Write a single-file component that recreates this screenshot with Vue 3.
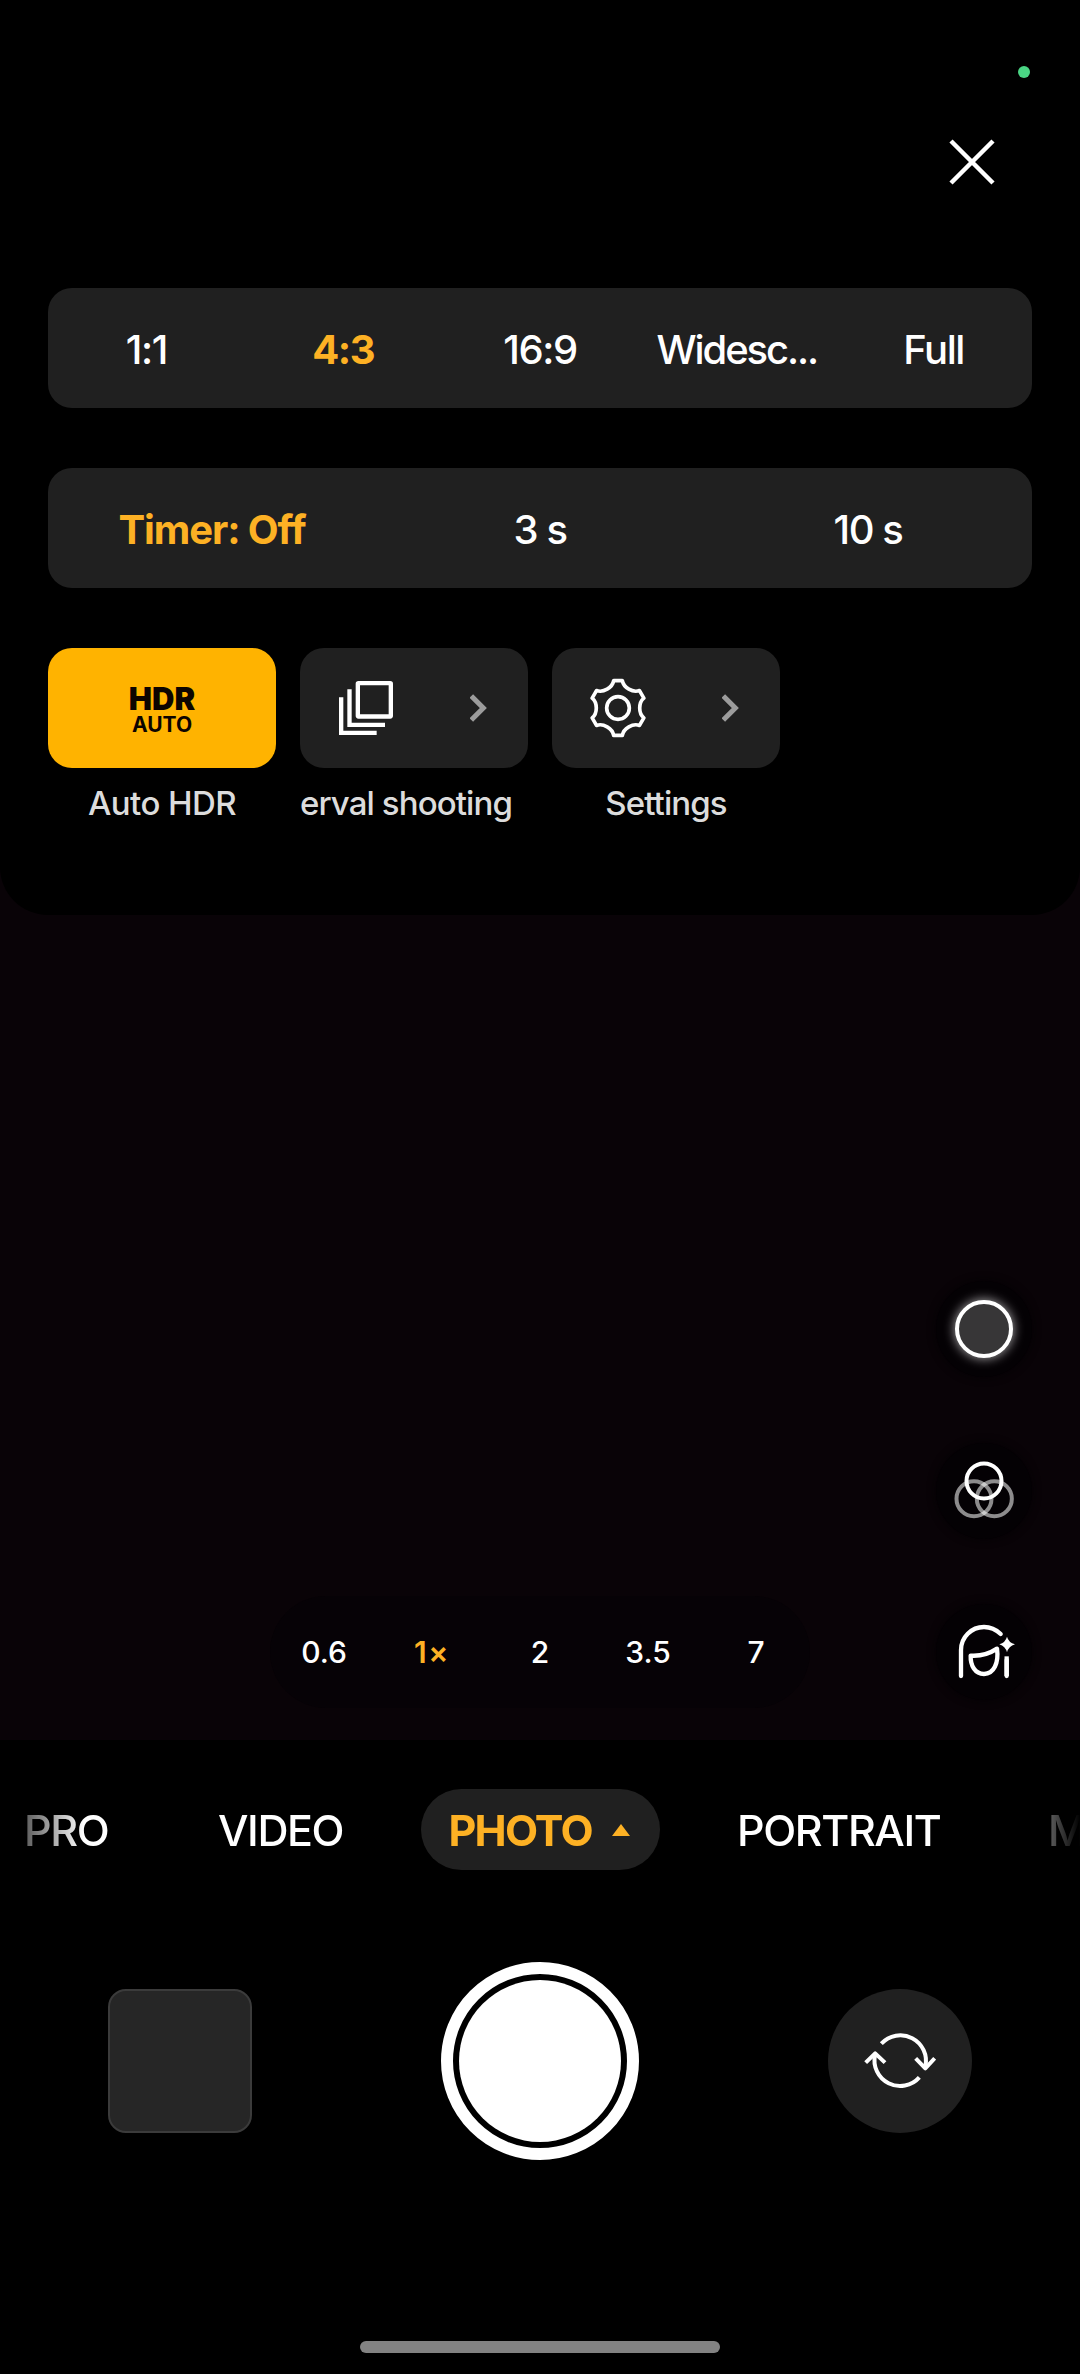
<script setup>
const ratios = [
  { label: '1:1', cls: 'r-square' },
  { label: '4:3', cls: 'r-standard', active: true },
  { label: '16:9', cls: 'r-wide' },
  { label: 'Widesc...', cls: 'r-cinema' },
  { label: 'Full', cls: 'r-full' },
]
const timers = [
  { label: 'Timer: Off', cls: 't-off', active: true },
  { label: '3 s', cls: 't-three' },
  { label: '10 s', cls: 't-ten' },
]
const zooms = [
  { label: '0.6' },
  { label: '1×', active: true },
  { label: '2' },
  { label: '3.5' },
  { label: '7' },
]

// One tooth and one valley of the gear, repeated every 60 degrees.
function gearPath() {
  const base = [[-13, -82], [13, -82], [16.6, -60.8], [44.4, -44.8], [64.5, -52.3]]
  let d = ''
  for (let i = 0; i < 6; i++) {
    const a = (i * Math.PI) / 3
    const p = base.map(([x, y]) =>
      [x * Math.cos(a) - y * Math.sin(a), x * Math.sin(a) + y * Math.cos(a)]
        .map((n) => n.toFixed(1))
        .join(' ')
    )
    d += `${i ? 'L' : 'M'}${p[0]}L${p[1]}C${p[2]} ${p[3]} ${p[4]}`
  }
  return d + 'Z'
}
const gear = gearPath()
</script>

<template>
  <div class="camera">
    <section class="stage">
      <div class="panel">
        <header class="status"><i class="dot"></i></header>
        <div class="close-row">
          <svg class="close" viewBox="0 0 48 48"><path d="M3 3L45 45M45 3L3 45" /></svg>
        </div>
        <div class="bar ratio-bar">
          <div v-for="r in ratios" :key="r.label" class="option" :class="{ active: r.active }">
            <span :class="r.cls">{{ r.label }}</span>
          </div>
        </div>
        <div class="bar timer-bar">
          <div v-for="t in timers" :key="t.label" class="option" :class="{ active: t.active }">
            <span :class="t.cls">{{ t.label }}</span>
          </div>
        </div>
        <div class="tiles">
          <div class="item">
            <div class="tile hdr">
              <b>HDR</b>
              <strong>AUTO</strong>
            </div>
            <div class="caption"><span class="c-hdr">Auto HDR</span></div>
          </div>
          <div class="item">
            <div class="tile">
              <svg class="icon" viewBox="927 153 162 162">
                <g fill="none" stroke="#fff" stroke-width="13">
                  <rect x="983.5" y="159.5" width="99" height="100" rx="2" />
                  <path d="M958.500 178V284.500H1065M933.500 202V308.500H1040" />
                </g>
              </svg>
              <svg class="chevron" viewBox="0 0 51 84"><path d="M4 6L40 42L4 78" /></svg>
            </div>
            <div class="caption scroll"><span class="c-interval">erval shooting</span></div>
          </div>
          <div class="item">
            <div class="tile">
              <svg class="icon gear" viewBox="-84 -90 168 180">
                <g fill="none" stroke="#fff" stroke-width="11" stroke-linejoin="round">
                  <path :d="gear" />
                  <circle r="34" />
                </g>
              </svg>
              <svg class="chevron" viewBox="0 0 51 84"><path d="M4 6L40 42L4 78" /></svg>
            </div>
            <div class="caption"><span class="c-settings">Settings</span></div>
          </div>
        </div>
      </div>

      <div class="controls">
        <div class="zoom">
          <span v-for="z in zooms" :key="z.label" :class="{ active: z.active }">{{ z.label }}</span>
        </div>
        <div class="rail">
          <div class="tool"><i class="ring"></i></div>
          <div class="tool">
            <svg viewBox="108 518 288 288">
              <g fill="none" stroke-width="12">
                <circle cx="222" cy="685" r="52.500" stroke="#fff" stroke-opacity=".55" />
                <circle cx="283" cy="685" r="52.500" stroke="#fff" stroke-opacity=".55" />
                <circle cx="252" cy="632" r="52.500" stroke="#fff" />
              </g>
            </svg>
          </div>
          <div class="tool">
            <svg viewBox="108 1002 288 288">
              <g fill="none" stroke="#fff" stroke-width="13" stroke-linejoin="round">
                <path stroke-linecap="round" d="M183 1218V1140A69 69 0 0 1 252 1071Q280 1071 302 1092" />
                <path d="M212 1157Q255 1160 291 1136C297 1180 281 1212 252 1212C225 1212 211 1187 212 1157Z" />
                <path d="M320 1159V1218" />
                <path stroke-linecap="round" d="M320 1170V1218" />
              </g>
              <path fill="#fff" d="M321 1100Q326 1118 345 1123Q326 1129 321 1147Q316 1129 298 1123Q316 1118 321 1100Z" />
            </svg>
          </div>
        </div>
      </div>
    </section>

    <nav class="modes">
      <span class="m-pro">PRO</span>
      <span class="m-video">VIDEO</span>
      <div class="pill">
        <span class="m-photo">PHOTO</span>
        <svg class="tri" viewBox="0 0 18 12"><path d="M9 0L18 12H0Z" /></svg>
      </div>
      <span class="m-portrait">PORTRAIT</span>
      <span class="m-more">M</span>
    </nav>

    <section class="shoot">
      <div class="thumb"></div>
      <div class="shutter"><i></i></div>
      <div class="flip">
        <svg viewBox="192 213 216 180">
          <g fill="none" stroke="#fff" stroke-width="12" stroke-linejoin="round">
            <path d="M244 251A77 77 0 0 1 376 320" />
            <path d="M347 295L376 325L404 295" />
            <path d="M358 352A77 77 0 0 1 225 285" />
            <path d="M197 308L225.500 280L255 308" />
          </g>
        </svg>
      </div>
    </section>

    <footer class="home"><i></i></footer>
  </div>
</template>

<style>
body {
  background: #000;
}
</style>

<style scoped>
.camera {
  width: 1080px;
  height: 2374px;
  background: #000;
  color: #fff;
  font-family: Inter, 'Liberation Sans', sans-serif;
  font-weight: 500;
  display: flex;
  flex-direction: column;
  overflow: hidden;
  white-space: nowrap;
}
.stage {
  height: 1740px;
  background: #090307;
  display: flex;
  flex-direction: column;
  justify-content: space-between;
}
.panel {
  height: 915px;
  box-sizing: border-box;
  padding: 0 48px;
  background: #000;
  border-radius: 0 0 48px 48px;
}
.status {
  height: 138px;
  box-sizing: border-box;
  padding: 66px 2px 0 0;
  display: flex;
  justify-content: flex-end;
}
.dot {
  width: 12px;
  height: 12px;
  border-radius: 50%;
  background: #4ad584;
}
.close-row {
  height: 150px;
  padding-right: 36px;
  display: flex;
  justify-content: flex-end;
}
.close {
  width: 48px;
  height: 48px;
  fill: none;
  stroke: #fff;
  stroke-width: 4.500;
}
.bar {
  height: 120px;
  box-sizing: border-box;
  padding-top: 3px;
  margin-bottom: 60px;
  border-radius: 24px;
  background: #202020;
  display: flex;
  align-items: center;
  font-size: 40px;
  line-height: 48px;
}
.option {
  flex: 1 1 0;
  min-width: 0;
  display: flex;
  justify-content: center;
  letter-spacing: -1.4px;
}
.r-cinema {
  letter-spacing: -2.1px;
}
.t-off {
  letter-spacing: -1.1px;
}
.active {
  color: #fdb124;
  font-weight: 700;
}
.tiles {
  display: flex;
  gap: 24px;
}
.item {
  width: 228px;
}
.tile {
  height: 120px;
  box-sizing: border-box;
  padding: 0 41px 0 39px;
  border-radius: 24px;
  background: #202020;
  display: flex;
  align-items: center;
  justify-content: space-between;
}
.icon {
  width: 54px;
  height: 54px;
}
.gear {
  width: 56px;
  height: 60px;
  margin-left: -1px;
}
.chevron {
  width: 17px;
  height: 28px;
  fill: none;
  stroke: #9c9c9c;
  stroke-width: 15;
}
.tile.hdr {
  background: #ffb300;
  color: #0d0500;
  flex-direction: column;
  justify-content: flex-start;
  padding: 37px 0 0;
}
.hdr b {
  font-size: 31px;
  line-height: 28px;
  font-weight: 900;
}
.hdr strong {
  font-size: 21px;
  line-height: 24px;
  font-weight: 700;
}
.caption {
  height: 40px;
  margin-top: 15px;
  font-size: 33px;
  line-height: 40px;
  font-weight: 450;
  letter-spacing: -0.9px;
  color: #dcdcdc;
  display: flex;
  justify-content: center;
  overflow: hidden;
}
.c-hdr {
  letter-spacing: -0.6px;
}
.caption.scroll {
  justify-content: flex-start;
}
.controls {
  display: flex;
  align-items: flex-end;
  justify-content: flex-end;
  padding: 0 48px 40px 0;
}
.zoom {
  width: 540px;
  height: 112px;
  margin: 0 126px -8px 0;
  border-radius: 56px;
  background: #060206;
  display: flex;
  align-items: center;
  font-size: 30px;
}
.zoom span {
  width: 108px;
  height: 96px;
  line-height: 97px;
  text-align: center;
}
.zoom .active {
  font-weight: 600;
  letter-spacing: 1.500px;
}
.rail {
  display: flex;
  flex-direction: column;
  gap: 65.500px;
}
.tool {
  width: 96px;
  height: 96px;
  border-radius: 50%;
  background: #040104;
  box-shadow: 0 0 8px #040104;
  display: flex;
  align-items: center;
  justify-content: center;
}
.tool svg {
  width: 96px;
  height: 96px;
}
.ring {
  width: 50px;
  height: 50px;
  border: 4px solid #fff;
  border-radius: 50%;
  background: #373637;
  box-shadow: 0 0 12px rgba(255, 255, 255, 0.7);
}
.modes {
  height: 179px;
  display: flex;
  align-items: center;
  font-size: 43px;
  line-height: 52px;
  letter-spacing: -1.4px;
  -webkit-mask-image: linear-gradient(90deg, rgba(0, 0, 0, 0.2) 10px, #000 84px, #000 996px, transparent 1080px);
  mask-image: linear-gradient(90deg, rgba(0, 0, 0, 0.2) 10px, #000 84px, #000 996px, transparent 1080px);
}
.modes > * {
  flex: none;
}
.m-pro {
  width: 194px;
  margin-left: 24px;
}
.m-video {
  width: 202.500px;
}
.pill {
  width: 239px;
  height: 81px;
  box-sizing: border-box;
  padding: 0 30px 0 28px;
  border-radius: 41px;
  background: #202020;
  color: #fdb124;
  font-weight: 700;
  letter-spacing: -1.8px;
  display: flex;
  align-items: center;
  justify-content: space-between;
}
.tri {
  width: 18px;
  height: 12px;
  fill: #fdb124;
}
.m-portrait {
  width: 311px;
  margin-left: 77.500px;
}
.shoot {
  height: 284px;
  padding: 0 108px;
  display: flex;
  align-items: center;
  justify-content: space-between;
}
.thumb {
  width: 144px;
  height: 144px;
  box-sizing: border-box;
  border: 2px solid #3b3b3b;
  border-radius: 18px;
  background: #262626;
}
.shutter {
  width: 174px;
  height: 174px;
  border: 12px solid #fff;
  border-radius: 50%;
  display: flex;
  align-items: center;
  justify-content: center;
}
.shutter i {
  width: 162px;
  height: 162px;
  border-radius: 50%;
  background: #fff;
}
.flip {
  width: 144px;
  height: 144px;
  border-radius: 50%;
  background: #202020;
  display: flex;
  align-items: center;
  justify-content: center;
}
.flip svg {
  width: 72px;
  height: 60px;
}
.home {
  flex: 1;
  display: flex;
  align-items: flex-end;
  justify-content: center;
  padding-bottom: 21px;
}
.home i {
  width: 360px;
  height: 12px;
  border-radius: 6px;
  background: #828282;
}
</style>
